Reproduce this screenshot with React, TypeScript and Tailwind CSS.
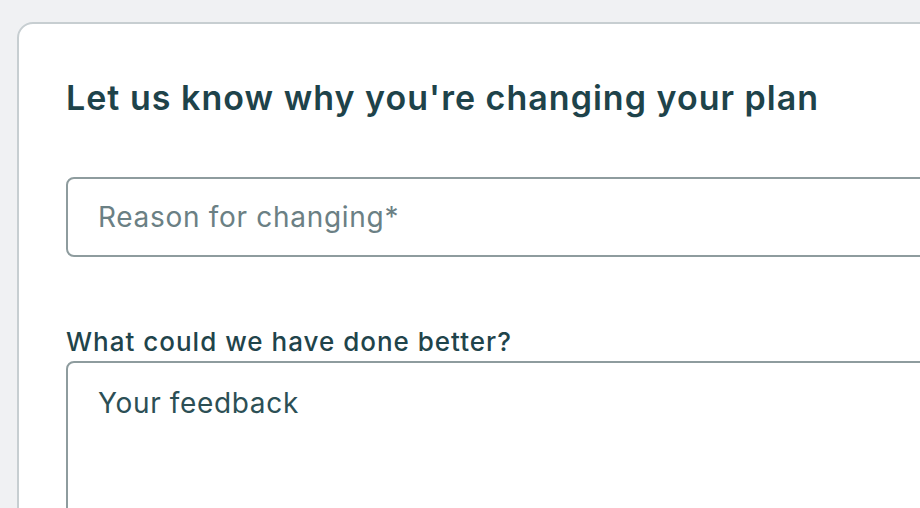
export default function App() {
  return (
    <div className="h-[508px] w-[920px] overflow-hidden bg-[#f0f1f3] font-['Inter',sans-serif]">
      <div className="ml-[17px] mt-[22px] w-[1000px] h-[600px] rounded-[16px] border-2 border-[#c7ced1] bg-white pl-[47px] pt-[53px]">
        {/* Heading */}
        <h2 className="text-[34px] leading-[42px] font-semibold tracking-[1.02px] text-[#1e434a]">
          Let us know why you're changing your plan
        </h2>

        {/* Reason select */}
        <div className="mt-[58px] flex h-[80px] items-center rounded-[8px] border-2 border-[#8e9c9e] pl-[30px]">
          <input
            readOnly
            placeholder="Reason for changing*"
            className="w-full bg-transparent text-[28px] leading-[34px] tracking-[0.7px] text-[#1f444b] outline-none placeholder:text-[#6b8084]"
          />
        </div>

        {/* Feedback */}
        <label className="mt-[69px] block text-[26px] leading-[32px] font-medium tracking-[1px] text-[#1f444b]">
          What could we have done better?
        </label>
        <textarea
          placeholder="Your feedback"
          className="mt-[3px] block h-[220px] w-full resize-none rounded-[8px] border-2 border-[#8e9c9e] pl-[30px] pt-[23px] text-[28px] leading-[34px] tracking-[0.65px] text-[#1f444b] outline-none placeholder:text-[#2c4f55]"
        />
      </div>
    </div>
  );
}
